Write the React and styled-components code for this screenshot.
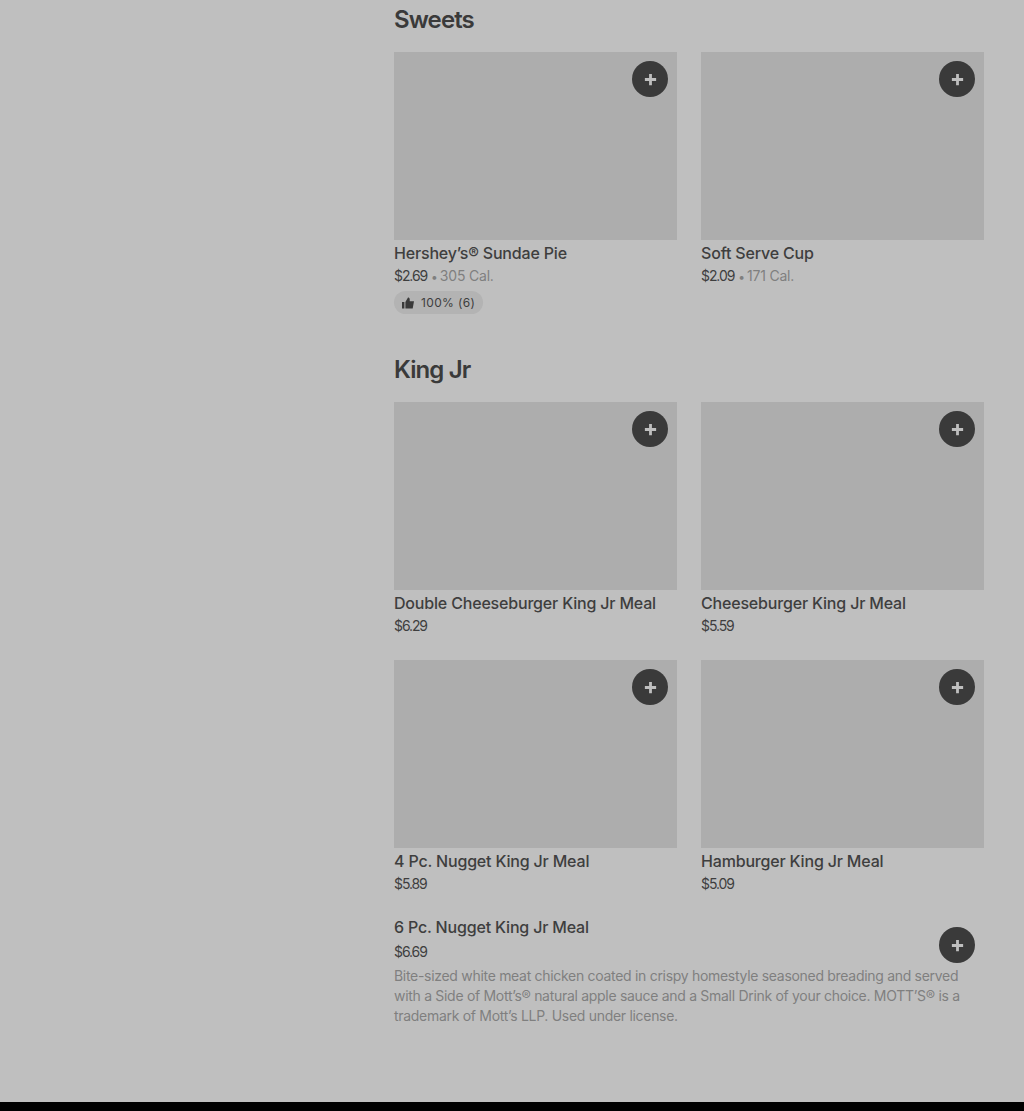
import React from 'react';
import styled, { createGlobalStyle } from 'styled-components';

const GlobalStyle = createGlobalStyle`
  html, body {
    margin: 0;
    padding: 0;
    height: 1111px;
    overflow: hidden;
    background: #bfbfbf;
  }
  * { box-sizing: border-box; }
`;

const Page = styled.div`
  height: 1111px;
  display: flex;
  flex-direction: column;
  font-family: Inter, "Liberation Sans", sans-serif;
  color: #3a3a3a;
`;

const Main = styled.main`
  flex: 1;
  padding: 6px 40px 0 394px;
`;

const Section = styled.section`
  margin-bottom: 42px;
`;

const Heading = styled.h2`
  margin: 0 0 18px;
  font-size: 24px;
  line-height: 28px;
  font-weight: 600;
  letter-spacing: -0.9px;
  color: #3a3a3a;
`;

const Grid = styled.div`
  display: grid;
  grid-template-columns: 283px 283px;
  column-gap: 24px;
  row-gap: 24px;
`;

const Card = styled.div`
  display: flex;
  flex-direction: column;
`;

const Photo = styled.div`
  position: relative;
  height: 188px;
  background: #adadad;
`;

const AddButton = styled.button`
  position: absolute;
  top: 9px;
  right: 9px;
  width: 36px;
  height: 36px;
  padding: 0;
  border: 0;
  border-radius: 50%;
  background: #3a3a3a;
  display: flex;
  align-items: center;
  justify-content: center;
`;

const Title = styled.div`
  margin-top: 2px;
  font-size: 16px;
  line-height: 22px;
  font-weight: 500;
  letter-spacing: -0.18px;
  color: #3e3e3e;
`;

const PriceLine = styled.div`
  margin-top: 2px;
  font-size: 14px;
  line-height: 20px;
  color: #3e3e3e;
`;

const Price = styled.span`
  letter-spacing: -1.1px;
`;

const Dot = styled.span`
  margin: 0 2px 0 4px;
  color: #7f7f7f;
  font-size: 12px;
`;

const Muted = styled.span`
  color: #7f7f7f;
  letter-spacing: -0.2px;
`;

const Badge = styled.div`
  margin-top: 4px;
  align-self: flex-start;
  height: 23px;
  display: flex;
  align-items: center;
  gap: 7px;
  padding: 0 8px;
  border-radius: 12px;
  background: #b3b3b3;
  font-size: 12px;
  letter-spacing: 0.35px;
  color: #3e3e3e;
`;

const Row = styled.div`
  position: relative;
  margin-top: 22px;
  padding-right: 4px;
`;

const RowButton = styled(AddButton)`
  top: 11px;
  right: 9px;
`;

const RowPrice = styled(PriceLine)`
  margin-top: 4px;
`;

const Description = styled.div`
  margin-top: 4px;
  font-size: 14px;
  line-height: 20px;
  letter-spacing: -0.3px;
  color: #7f7f7f;
`;

const Footer = styled.footer`
  height: 9px;
  background: #000;
`;

const PlusIcon = () => (
  <svg width="15" height="15" viewBox="0 0 16 16" fill="#bfbfbf">
    <path d="M6.500 2h3v4.500H14v3H9.500V14h-3V9.500H2v-3h4.500z" />
  </svg>
);

const ThumbIcon = () => (
  <svg width="12" height="12" viewBox="0 0 12 12" fill="#3a3a3a">
    <path d="M0 5h2.400v6.500H0zM3.400 5 6 .4c1 0 1.700.7 1.700 1.700V4.300H12l-1.300 7.200H3.400z" />
  </svg>
);

const Item = ({ title, price, cal, rating }) => (
  <Card>
    <Photo>
      <AddButton aria-label="Add"><PlusIcon /></AddButton>
    </Photo>
    <Title>{title}</Title>
    <PriceLine>
      <Price>{price}</Price>
      {cal && <Dot>•</Dot>}
      {cal && <Muted>{cal}</Muted>}
    </PriceLine>
    {rating && (
      <Badge>
        <ThumbIcon />
        {rating}
      </Badge>
    )}
  </Card>
);

export default function App() {
  return (
    <Page>
      <GlobalStyle />
      <Main>
        <Section>
          <Heading>Sweets</Heading>
          <Grid>
            <Item title="Hershey’s® Sundae Pie" price="$2.69" cal="305 Cal." rating="100% (6)" />
            <Item title="Soft Serve Cup" price="$2.09" cal="171 Cal." />
          </Grid>
        </Section>
        <Section>
          <Heading>King Jr</Heading>
          <Grid>
            <Item title="Double Cheeseburger King Jr Meal" price="$6.29" />
            <Item title="Cheeseburger King Jr Meal" price="$5.59" />
            <Item title="4 Pc. Nugget King Jr Meal" price="$5.89" />
            <Item title="Hamburger King Jr Meal" price="$5.09" />
          </Grid>
          <Row>
            <Title>6 Pc. Nugget King Jr Meal</Title>
            <RowPrice><Price>$6.69</Price></RowPrice>
            <Description>
              Bite-sized white meat chicken coated in crispy homestyle seasoned breading and served with a Side of Mott’s® natural apple sauce and a Small Drink of your choice. MOTT’S® is a trademark of Mott’s LLP. Used under license.
            </Description>
            <RowButton aria-label="Add"><PlusIcon /></RowButton>
          </Row>
        </Section>
      </Main>
      <Footer />
    </Page>
  );
}
